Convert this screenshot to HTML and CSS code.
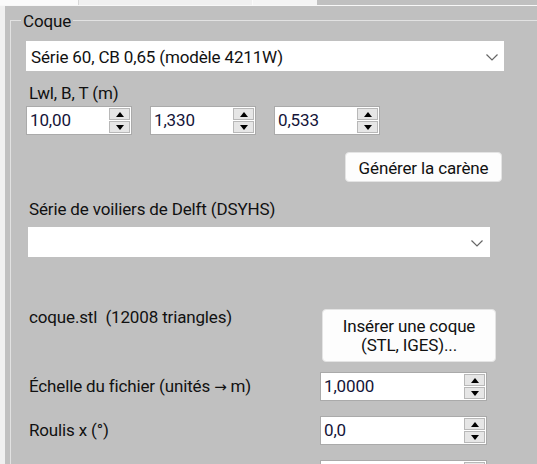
FILE: index.html
```html
<!DOCTYPE html>
<html lang="fr">
<head>
<meta charset="utf-8">
<title>Coque</title>
<link rel="stylesheet" href="styles.css">
</head>
<body>
<div class="tabstrip">
  <div class="tab tab-a"></div>
  <div class="tab tab-b"></div>
  <div class="tab tab-c"></div>
</div>
<div class="page">
  <div class="group">
    <div class="group-title">Coque</div>
    <div class="content">
      <div class="combo combo-wide">
        <span class="combo-text">Série 60, CB 0,65 (modèle 4211W)</span>
        <svg class="chev" width="12" height="7" viewBox="0 0 12 7"><polyline points="0.5,0.5 6,6 11.5,0.5" fill="none" stroke="#666" stroke-width="1.2"/></svg>
      </div>
      <div class="label label-lwl">Lwl, B, T (m)</div>
      <div class="spin-row">
        <div class="spin spin-small">
          <span class="spin-text">10,00</span>
          <div class="spin-btns">
            <div class="sbtn"><svg width="8" height="5" viewBox="0 0 8 5"><polygon points="4,0 8,5 0,5" fill="#000"/></svg></div>
            <div class="sbtn"><svg width="8" height="5" viewBox="0 0 8 5"><polygon points="0,0 8,0 4,5" fill="#000"/></svg></div>
          </div>
        </div>
        <div class="spin spin-small">
          <span class="spin-text">1,330</span>
          <div class="spin-btns">
            <div class="sbtn"><svg width="8" height="5" viewBox="0 0 8 5"><polygon points="4,0 8,5 0,5" fill="#000"/></svg></div>
            <div class="sbtn"><svg width="8" height="5" viewBox="0 0 8 5"><polygon points="0,0 8,0 4,5" fill="#000"/></svg></div>
          </div>
        </div>
        <div class="spin spin-small">
          <span class="spin-text">0,533</span>
          <div class="spin-btns">
            <div class="sbtn"><svg width="8" height="5" viewBox="0 0 8 5"><polygon points="4,0 8,5 0,5" fill="#000"/></svg></div>
            <div class="sbtn"><svg width="8" height="5" viewBox="0 0 8 5"><polygon points="0,0 8,0 4,5" fill="#000"/></svg></div>
          </div>
        </div>
      </div>
      <button class="btn btn-gen">Générer la carène</button>
      <div class="label label-delft">Série de voiliers de Delft (DSYHS)</div>
      <div class="combo combo-delft">
        <span class="combo-text"></span>
        <svg class="chev" width="12" height="7" viewBox="0 0 12 7"><polyline points="0.5,0.5 6,6 11.5,0.5" fill="none" stroke="#666" stroke-width="1.2"/></svg>
      </div>
      <div class="file-row">
        <div class="label">coque.stl&nbsp;&nbsp;(12008 triangles)</div>
        <button class="btn btn-insert">Insérer une coque<br>(STL, IGES)...</button>
      </div>
      <div class="param-row param-first">
        <div class="label">Échelle du fichier (unités <span class="arrow">→</span> m)</div>
        <div class="spin spin-large">
          <span class="spin-text">1,0000</span>
          <div class="spin-btns">
            <div class="sbtn"><svg width="8" height="5" viewBox="0 0 8 5"><polygon points="4,0 8,5 0,5" fill="#000"/></svg></div>
            <div class="sbtn"><svg width="8" height="5" viewBox="0 0 8 5"><polygon points="0,0 8,0 4,5" fill="#000"/></svg></div>
          </div>
        </div>
      </div>
      <div class="param-row">
        <div class="label">Roulis x (°)</div>
        <div class="spin spin-large">
          <span class="spin-text">0,0</span>
          <div class="spin-btns">
            <div class="sbtn"><svg width="8" height="5" viewBox="0 0 8 5"><polygon points="4,0 8,5 0,5" fill="#000"/></svg></div>
            <div class="sbtn"><svg width="8" height="5" viewBox="0 0 8 5"><polygon points="0,0 8,0 4,5" fill="#000"/></svg></div>
          </div>
        </div>
      </div>
      <div class="param-row">
        <div class="label">Tangage y (°)</div>
        <div class="spin spin-large">
          <span class="spin-text">0,00</span>
          <div class="spin-btns">
            <div class="sbtn"><svg width="8" height="5" viewBox="0 0 8 5"><polygon points="4,0 8,5 0,5" fill="#000"/></svg></div>
            <div class="sbtn"><svg width="8" height="5" viewBox="0 0 8 5"><polygon points="0,0 8,0 4,5" fill="#000"/></svg></div>
          </div>
        </div>
      </div>
    </div>
  </div>
</div>
</body>
</html>
```

FILE: styles.css
```css
html, body {
  margin: 0;
  padding: 0;
}
body {
  width: 537px;
  height: 464px;
  overflow: hidden;
  background: #c0c0c0;
  font-family: Roboto, "Liberation Sans", sans-serif;
  font-size: 17px;
  line-height: 20px;
  letter-spacing: -0.15px;
  color: #111;
}
.tabstrip {
  display: flex;
  height: 5px;
  border-bottom: 1px solid #f8f8f8;
}
.tab {
  height: 5px;
}
.tab-a {
  width: 78px;
  background: #fbfbfb;
  border-right: 1px solid #d8d8d8;
}
.tab-b {
  width: 173px;
  background: #f0f0f0;
  border-right: 1px solid #fafafa;
}
.tab-c {
  width: 64px;
  background: #f4f4f4;
}
.page {
  display: flex;
  border-left: 5px solid #f0f0f0;
  height: 458px;
}
.group {
  margin: 14px 0 0 5px;
  width: 700px;
  border: 1px solid #e2e2e2;
  border-bottom: none;
  flex: none;
}
.group-title {
  width: fit-content;
  margin: -12px 0 0 10px;
  padding: 2px 2px 0 2px;
  background: #c0c0c0;
  color: #111;
}
.content {
  display: flex;
  flex-direction: column;
  width: 478px;
  margin-left: 15px;
}
.combo {
  display: flex;
  align-items: center;
  height: 30px;
  box-sizing: border-box;
  background: #fff;
  padding: 2px 6px 0 5px;
}
.combo-text {
  flex: 1;
}
.chev {
  flex: none;
}
.combo-wide {
  margin-top: 10px;
}
.label {
  white-space: nowrap;
  margin-left: 3px;
}
.arrow {
  font-family: "DejaVu Sans", sans-serif;
  font-size: 15px;
}
.label-lwl {
  margin-top: 12px;
}
.spin-row {
  display: flex;
  gap: 18px;
  margin-top: 3px;
}
.spin {
  display: flex;
  box-sizing: border-box;
  height: 29px;
  background: #fff;
  border: 1px solid #aaaaaa;
  color: #141438;
}
.spin-small {
  width: 106px;
}
.spin-large {
  width: 167px;
}
.spin-text {
  flex: 1;
  padding: 3px 0 0 3px;
}
.spin-btns {
  display: flex;
  flex-direction: column;
  gap: 1px;
  width: 21px;
  margin: 1px 1px 1px 0;
}
.sbtn {
  flex: 1;
  display: flex;
  align-items: center;
  justify-content: center;
  background: #e6e6e6;
  border: 1px solid #b8b8b8;
}
.btn {
  font: inherit;
  letter-spacing: inherit;
  color: #111;
  background: #fdfdfd;
  border: 1px solid #e4e4e4;
  border-radius: 4px;
  padding: 0;
  box-sizing: border-box;
}
.btn-gen {
  align-self: flex-end;
  margin: 17px 2px 0 0;
  width: 157px;
  height: 30px;
  padding-top: 2px;
}
.label-delft {
  margin-top: 17px;
}
.combo-delft {
  margin: 8px 0 0 2px;
  width: 462px;
  padding-right: 7px;
}
.file-row {
  display: flex;
  justify-content: space-between;
  align-items: flex-start;
  margin-top: 50px;
  margin-right: 8px;
}
.btn-insert {
  margin-top: 2px;
  width: 174px;
  height: 53px;
  line-height: 19px;
}
.param-row {
  display: flex;
  justify-content: space-between;
  align-items: flex-start;
  margin-top: 15px;
  margin-right: 17px;
}
.param-row .label {
  margin-top: 4px;
}
.param-first {
  margin-top: 10px;
}
```
